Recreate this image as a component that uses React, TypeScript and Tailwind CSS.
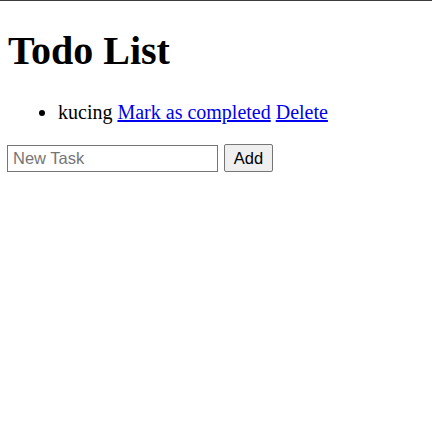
import { useState } from "react";

type Task = { id: number; title: string; completed: boolean };

export default function App() {
  const [tasks, setTasks] = useState<Task[]>([
    { id: 1, title: "kucing", completed: false },
  ]);
  const [text, setText] = useState("");

  const addTask = () => {
    if (!text.trim()) return;
    setTasks([...tasks, { id: Date.now(), title: text, completed: false }]);
    setText("");
  };

  return (
    <div className="min-h-[440px] w-full border-t border-[#3c3c3c] bg-white px-[7px] font-['Liberation_Serif',serif] text-black">
      {/* Title */}
      <h1 className="mt-[27px] pl-px text-[40px] font-bold leading-[46px]">
        Todo List
      </h1>

      {/* Tasks */}
      <ul className="mt-[27px] list-disc pl-[51px] text-[20px] leading-[23px]">
        {tasks.map((task) => (
          <li key={task.id}>
            <span className={task.completed ? "line-through" : ""}>{task.title}</span>{" "}
            <a href="#" className="text-[#0000ee] underline">
              Mark as completed
            </a>{" "}
            <a href="#" className="text-[#0000ee] underline">
              Delete
            </a>
          </li>
        ))}
      </ul>

      {/* New task form */}
      <div className="mt-[20px] flex items-center gap-[6px]">
        <input
          value={text}
          onChange={(e) => setText(e.target.value)}
          placeholder="New Task"
          className="h-[27px] w-[211px] border border-[#767676] px-[5px] font-['Liberation_Sans',sans-serif] text-[16.5px] text-black placeholder:text-[#757575] outline-none"
        />
        <button
          onClick={addTask}
          className="h-[28px] w-[49px] rounded-[2px] border border-[#767676] bg-[#efefef] font-['Liberation_Sans',sans-serif] text-[16.5px] text-black"
        >
          Add
        </button>
      </div>
    </div>
  );
}
